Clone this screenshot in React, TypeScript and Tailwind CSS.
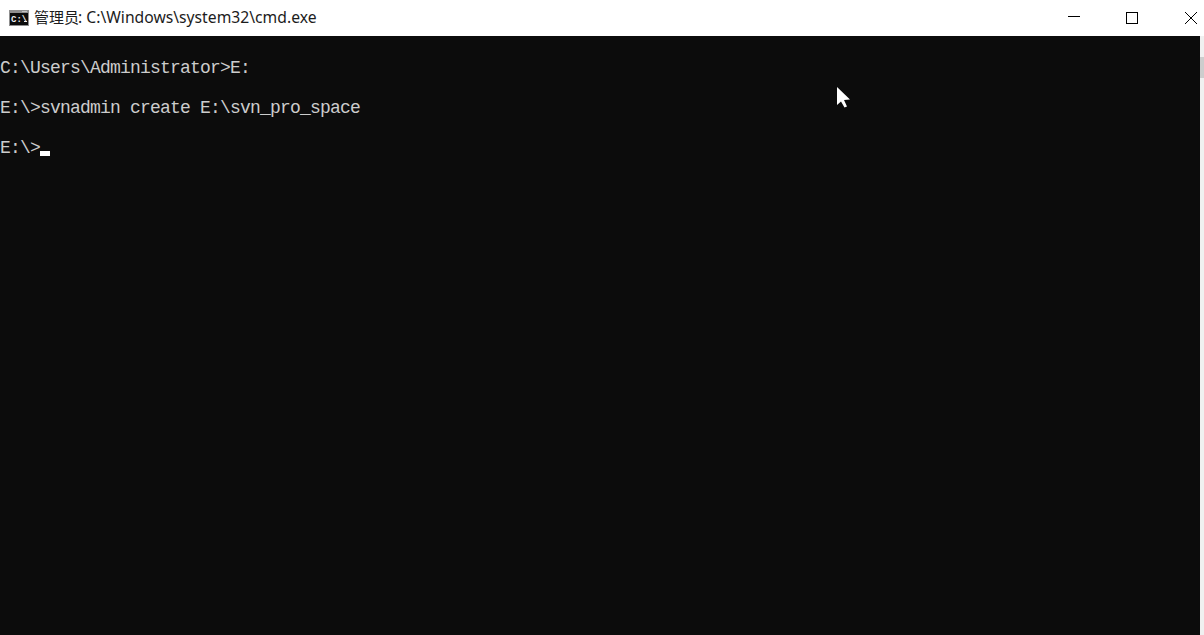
const lines = ['C:\\Users\\Administrator>E:', 'E:\\>svnadmin create E:\\svn_pro_space', 'E:\\>']

export default function App() {
  return (
    <div className="relative flex h-[635px] w-[1204px] flex-col overflow-hidden bg-[#0c0c0c]">
      {/* Title bar */}
      <div className="flex h-9 shrink-0 items-center bg-white pl-[9px] text-black">
        <svg width="20" height="16" viewBox="0 0 20 16" className="shrink-0">
          <rect width="20" height="16" fill="#8f8f8f" />
          <rect x="13" y="1" width="5" height="1" fill="#c4c4c4" />
          <rect x="1" y="3" width="18" height="12" fill="#0c0c0c" />
          <text x="2" y="12" fill="#f0f0f0" fontSize="9" fontWeight="700" fontFamily="'Liberation Mono', monospace">C:\</text>
          <rect x="15" y="11" width="3" height="1" fill="#f0f0f0" />
        </svg>
        <span className="ml-[5px] font-['Noto_Sans','Noto_Sans_CJK_SC',sans-serif] text-[15.7px] whitespace-nowrap text-[#1c1c1c]">
          <span className="mr-[-1px] text-[15px]">管理员</span>: C:\Windows\system32\cmd.exe
        </span>
        <div className="mr-[7px] mb-[1px] ml-auto flex items-center gap-[46px]">
          <div className="mb-[3px] h-px w-3 bg-black" />
          <div className="mr-px h-3 w-3 border border-black" />
          <svg width="12" height="12" viewBox="0 0 12 12" stroke="#000" strokeWidth="1">
            <path d="M0 0L12 12M12 0L0 12" />
          </svg>
        </div>
      </div>

      {/* Console */}
      <div className="flex min-h-0 flex-1">
        <div className="flex-1 pt-[12px] font-['Liberation_Mono',monospace] text-[18px] leading-[40px] tracking-[-0.802px] text-[#cccccc]">
          {lines.map((line, i) => (
            <div key={i} className="flex h-10 items-center whitespace-pre">
              {line}
              {i === 2 && <span className="mt-[10px] h-[5px] w-[10px] bg-white" />}
            </div>
          ))}
        </div>
        <div className="w-1 shrink-0 bg-[#f0f0f0] pt-[21px]">
          <div className="h-[21px] bg-[#cdcdcd]" />
        </div>
      </div>

      {/* Mouse pointer */}
      <svg width="16" height="23" viewBox="0 0 16 23" className="absolute top-[86px] left-[836px]">
        <path d="M1 1L1 19L5 15.5L8.5 21.5L11 20.5L8 14L14 13.5Z" fill="#fff" />
      </svg>
    </div>
  )
}
